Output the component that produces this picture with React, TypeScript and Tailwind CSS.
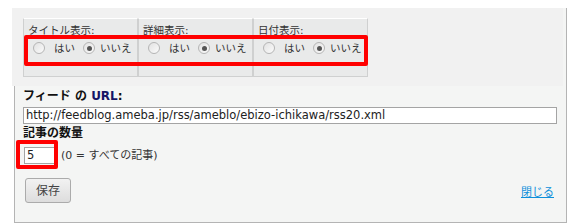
import React from "react";

const jp = { fontFamily: '"DejaVu Sans", "Noto Sans CJK JP", sans-serif' };

function Radio({ checked }: { checked?: boolean }) {
  return (
    <span className="inline-flex h-[12px] w-[12px] shrink-0 items-center justify-center rounded-full border border-[#b5b5b5] bg-gradient-to-br from-[#e2e2e2] to-[#fbfbfb]">
      {checked && <span className="h-[5px] w-[5px] rounded-full bg-[#555]" />}
    </span>
  );
}

function Cell({ label }: { label: string }) {
  return (
    <div className="h-[59px] w-[115px] whitespace-nowrap border border-[#cfd0d0] border-t-white bg-[#e9eaea] pl-[4px] pt-[4px]">
      <div className="text-[10.5px] leading-[14px] text-[#333]">{label}</div>
      <div className="mt-[4px] flex items-center text-[10.5px] leading-[14px] text-[#333]">
        <span className="ml-[5px] flex"><Radio /></span>
        <span className="ml-[9px]">はい</span>
        <span className="ml-[8px] flex"><Radio checked /></span>
        <span className="ml-[5px]">いいえ</span>
      </div>
    </div>
  );
}

export default function App() {
  return (
    <div className="relative h-[224px] w-[576px] overflow-hidden bg-white" style={jp}>
      <div className="ml-[14px] h-[215px] w-[553px] border-x border-b border-[#b4b4b4] bg-[#f4f5f4]">
        {/* options block */}
        <div className="ml-[-3px] mt-[8px] h-[78px] w-[551px] bg-[#f1f1f1] pl-[11px] pt-[10px]">
          <div className="flex">
            <Cell label="タイトル表示:" />
            <Cell label="詳細表示:" />
            <Cell label="日付表示:" />
          </div>
        </div>

        <div className="pl-[8px]">
          <div className="mt-[3px] text-[12px] font-bold leading-[14px] text-[#111]">
            フィード の <span className="text-[#141466]">URL</span>:
          </div>
          <div className="mt-[4px] h-[17px] w-[534px] whitespace-nowrap border border-[#a4a4a4] bg-white pl-[2px] text-[11.5px] leading-[15px] text-[#222]">
            http://feedblog.ameba.jp/rss/ameblo/ebizo-ichikawa/rss20.xml
          </div>
          <div className="mt-[2px] text-[12px] font-bold leading-[14px] text-[#111]">記事の数量</div>
          <div className="mt-[7px] flex items-center">
            <div className="ml-[1px] h-[17px] w-[32px] border border-[#a4a4a4] bg-white pl-[2px] text-[11.5px] leading-[15px] text-[#222]">
              5
            </div>
            <span className="ml-[5px] whitespace-nowrap text-[11px] leading-[14px] text-[#333]">(0 = すべての記事)</span>
          </div>
          <div className="mt-[14px] flex items-end justify-between pr-[12px]">
            <button className="ml-[2px] h-[25px] w-[46px] rounded-[3px] border border-[#ababab] bg-gradient-to-b from-[#f2f2f2] to-[#dddddd] text-[12px] text-[#444]">
              保存
            </button>
            <a className="mb-[3px] text-[11px] leading-[14px] text-[#0d8fdb] underline">閉じる</a>
          </div>
        </div>
      </div>

      {/* red annotation boxes */}
      <div className="absolute left-[24px] top-[35px] h-[31px] w-[344px] rounded-[2px] border-[4px] border-[#ff0000]" />
      <div className="absolute left-[16px] top-[140px] h-[29px] w-[42px] rounded-[2px] border-[4px] border-[#ff0000]" />
    </div>
  );
}
